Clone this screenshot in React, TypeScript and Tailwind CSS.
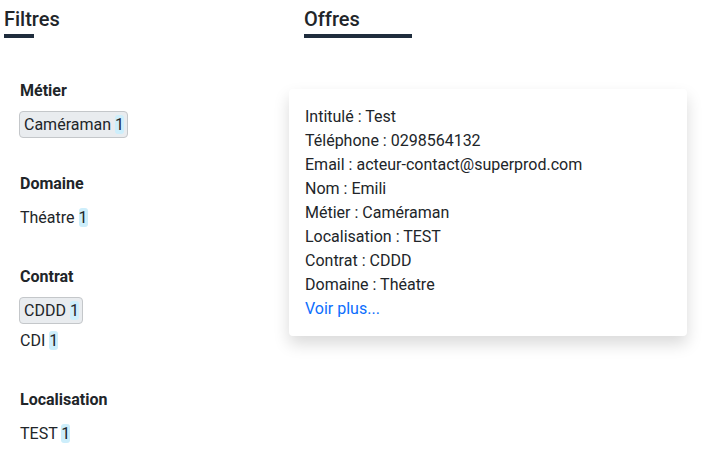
const filters = [
  {
    title: 'Métier',
    items: [{ label: 'Caméraman', count: 1, active: true }],
  },
  {
    title: 'Domaine',
    items: [{ label: 'Théatre', count: 1, active: false }],
  },
  {
    title: 'Contrat',
    items: [
      { label: 'CDDD', count: 1, active: true },
      { label: 'CDI', count: 1, active: false },
    ],
  },
  {
    title: 'Localisation',
    items: [{ label: 'TEST', count: 1, active: false }],
  },
];

const offre = [
  ['Intitulé', 'Test'],
  ['Téléphone', '0298564132'],
  ['Email', 'acteur-contact@superprod.com'],
  ['Nom', 'Emili'],
  ['Métier', 'Caméraman'],
  ['Localisation', 'TEST'],
  ['Contrat', 'CDDD'],
  ['Domaine', 'Théatre'],
];

const SectionTitle = ({ label, barWidth }: { label: string; barWidth: string }) => (
  <div>
    <h5 className="text-[20px] leading-6 font-medium text-[#212529]">{label}</h5>
    <div className={`mt-[3px] h-1 ${barWidth} bg-[#1f2d3d]`} />
  </div>
);

const Count = ({ n }: { n: number }) => (
  <span className="rounded-[3px] bg-[#cdeefb]">{n}</span>
);

export default function App() {
  return (
    <div
      className="flex w-[712px] h-[476px] bg-white text-[16px] text-[#212529] overflow-hidden"
      style={{ fontFamily: 'Roboto, sans-serif' }}
    >
      {/* filtres */}
      <div className="w-[289px] shrink-0 pl-1 pt-[7px]">
        <SectionTitle label="Filtres" barWidth="w-[30px]" />
        <div className="pl-4 mt-[41px]">
          {filters.map((f) => (
            <div key={f.title} className="mb-[34px]">
              <h6 className="font-bold leading-6 mb-2">{f.title}</h6>
              {f.items.map((it) => (
                <div key={it.label} className="mb-[3px] flex h-[27px] items-center">
                  {it.active ? (
                    <span className="-ml-px inline-block rounded border border-[#c4c7ca] bg-[#e9ecef] pl-1 pr-[3px] leading-[25px]">
                      {it.label} <Count n={it.count} />
                    </span>
                  ) : (
                    <span className="leading-6">
                      {it.label} <Count n={it.count} />
                    </span>
                  )}
                </div>
              ))}
            </div>
          ))}
        </div>
      </div>

      {/* offres */}
      <div className="w-[398px] shrink-0 pt-[7px]">
        <div className="pl-[15px]">
          <SectionTitle label="Offres" barWidth="w-[108px]" />
        </div>
        <div className="mt-[51px] rounded bg-white px-4 pt-[16px] pb-[15px] shadow-[0_8px_16px_rgba(0,0,0,0.15)]">
          {offre.map(([k, v]) => (
            <p key={k} className="leading-6">
              {k} : {v}
            </p>
          ))}
          <a href="#" className="leading-6 text-[#0d6efd]">
            Voir plus...
          </a>
        </div>
      </div>
    </div>
  );
}
